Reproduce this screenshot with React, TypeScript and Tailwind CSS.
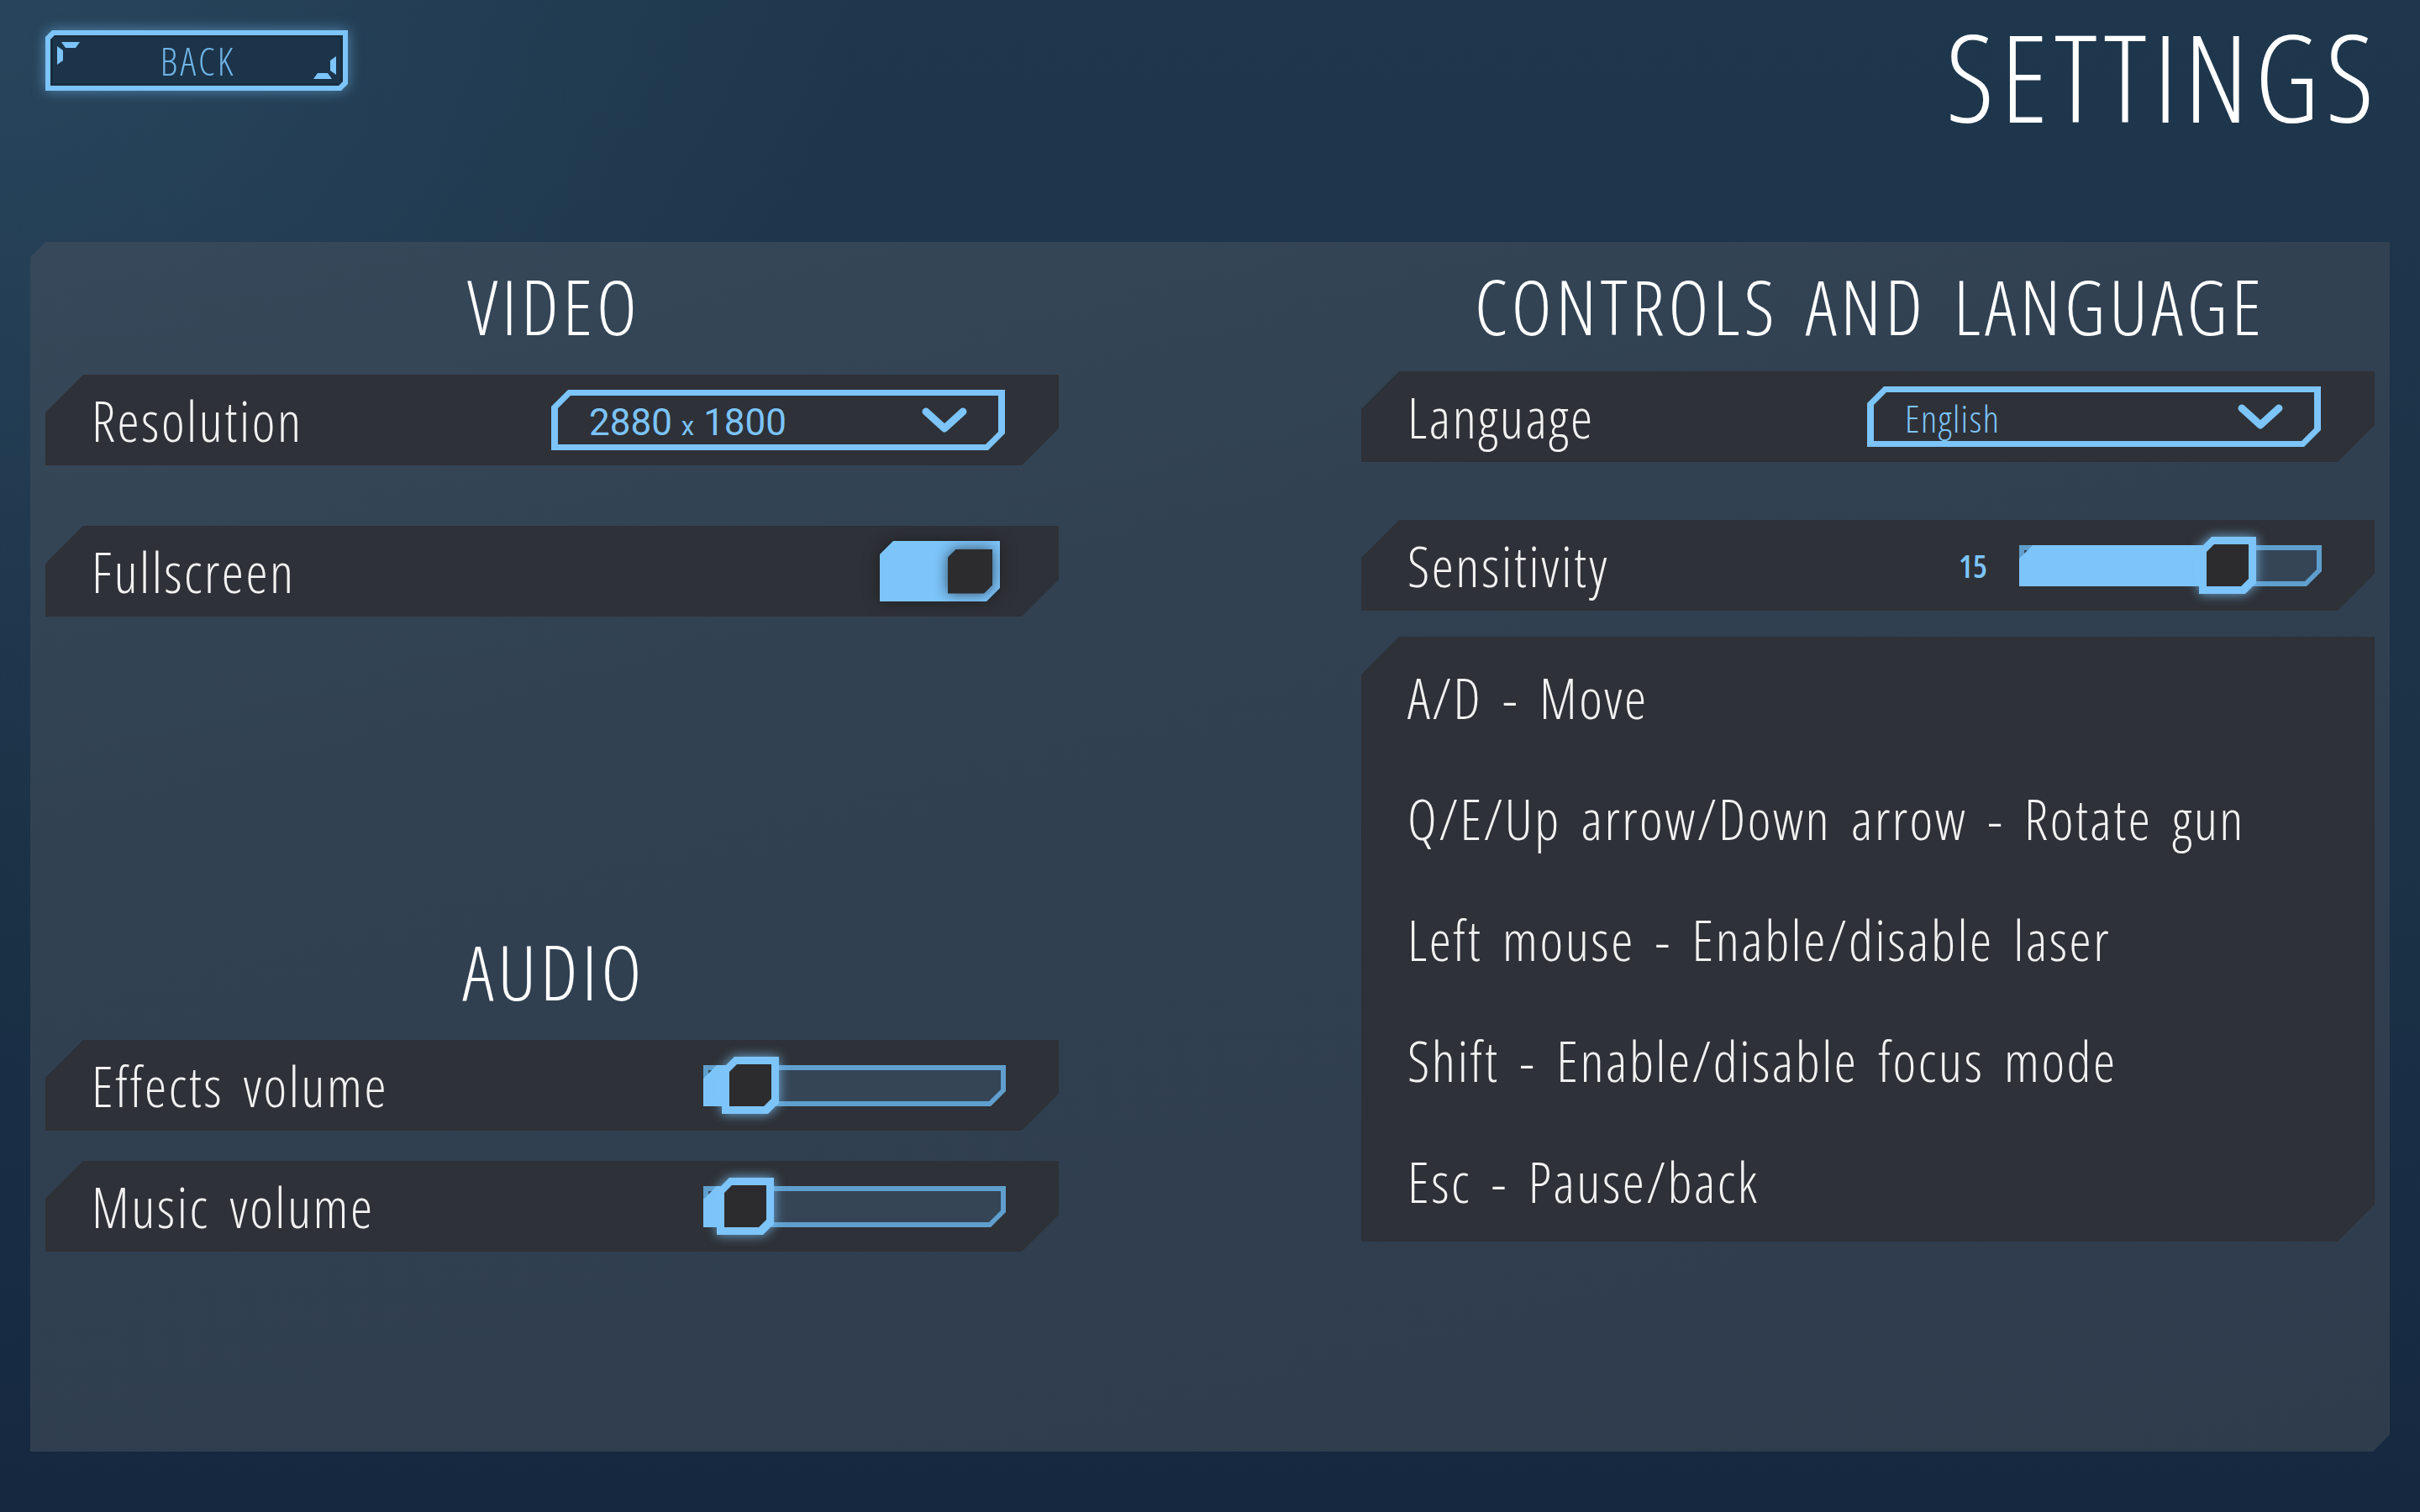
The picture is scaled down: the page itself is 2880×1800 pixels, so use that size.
import React from "react";

const controls = [
  "A/D - Move",
  "Q/E/Up arrow/Down arrow - Rotate gun",
  "Left mouse - Enable/disable laser",
  "Shift - Enable/disable focus mode",
  "Esc - Pause/back",
];

function Chevron() {
  return (
    <svg width="54" height="31" viewBox="0 0 54 31" fill="none">
      <polyline
        points="5,5 27,25 49,5"
        stroke="#7cc4f9"
        strokeWidth="9"
        strokeLinecap="round"
        strokeLinejoin="round"
      />
    </svg>
  );
}

function Bracket({ className = "" }: { className?: string }) {
  return (
    <svg width="27" height="27" viewBox="0 0 27 27" className={className}>
      <polygon points="5,0 27,0 22,7 10,7" fill="#7cc4f9" />
      <polygon points="0,5 7,10 7,22 0,27" fill="#7cc4f9" />
    </svg>
  );
}

function Row({
  label,
  children,
  className = "",
}: {
  label: string;
  children?: React.ReactNode;
  className?: string;
}) {
  return (
    <div
      className={`flex h-[108px] shrink-0 items-center justify-between bg-[#2e3137] pl-[55px] [clip-path:polygon(45px_0,100%_0,100%_calc(100%_-_44px),calc(100%_-_44px)_100%,0_100%,0_45px)] ${className}`}
    >
      <span className="text-[66px] leading-none tracking-[2.5px] text-[#f2f2f2] [word-spacing:9px]">
        {label}
      </span>
      {children}
    </div>
  );
}

function Dropdown({ children }: { children: React.ReactNode }) {
  return (
    <div className="mr-[64px] h-[72px] w-[540px] bg-[#7cc4f9] p-[7px_8px] [clip-path:polygon(20px_0,100%_0,100%_calc(100%_-_20px),calc(100%_-_20px)_100%,0_100%,0_20px)]">
      <div className="flex h-full items-center justify-between bg-[#2e3137] pl-[37px] pr-[37px] [clip-path:polygon(15px_0,100%_0,100%_calc(100%_-_15px),calc(100%_-_15px)_100%,0_100%,0_15px)]">
        {children}
        <Chevron />
      </div>
    </div>
  );
}

function Toggle() {
  return (
    <div className="mr-[70px] drop-shadow-[0_0_10px_rgba(0,0,0,0.35)]">
      <div className="flex h-[72px] w-[143px] items-center justify-end bg-[#7cc4f9] pr-[9px] [clip-path:polygon(16px_0,100%_0,100%_calc(100%_-_16px),calc(100%_-_16px)_100%,0_100%,0_16px)]">
        <div className="drop-shadow-[0_0_8px_rgba(25,35,50,0.75)]">
          <div className="h-[53px] w-[53px] bg-[#2c2c2e] [clip-path:polygon(10px_0,100%_0,100%_calc(100%_-_10px),calc(100%_-_10px)_100%,0_100%,0_10px)]" />
        </div>
      </div>
    </div>
  );
}

function Slider({ knob, className = "" }: { knob: number; className?: string }) {
  return (
    <div className={`relative h-[68px] w-[360px] ${className}`}>
      <div className="absolute inset-x-0 top-[10px] h-[49px] bg-[#5f9fce] p-[6px] [clip-path:polygon(0_0,100%_0,100%_calc(100%_-_18px),calc(100%_-_18px)_100%,0_100%)]">
        <div className="h-full w-full bg-[#354556] [clip-path:polygon(0_0,100%_0,100%_calc(100%_-_14px),calc(100%_-_14px)_100%,0_100%)]" />
      </div>
      <div
        className="absolute left-0 top-[10px] h-[49px] bg-[#7cc4f9] [clip-path:polygon(16px_0,100%_0,100%_100%,0_100%,0_16px)]"
        style={{ width: knob + 34 }}
      />
      <div
        className="absolute top-0 drop-shadow-[0_0_7px_rgba(124,196,249,0.85)]"
        style={{ left: knob }}
      >
        <div className="h-[68px] w-[68px] bg-[#7cc4f9] p-[9px] [clip-path:polygon(15px_0,100%_0,100%_calc(100%_-_13px),calc(100%_-_13px)_100%,0_100%,0_15px)]">
          <div className="h-full w-full bg-[#2c2c2e] [clip-path:polygon(9px_0,100%_0,100%_calc(100%_-_9px),calc(100%_-_9px)_100%,0_100%,0_9px)]" />
        </div>
      </div>
    </div>
  );
}

function Heading({ children, className = "" }: { children: React.ReactNode; className?: string }) {
  return (
    <h2
      className={`pl-[5px] text-center text-[91px] leading-none tracking-[5px] text-white [word-spacing:10px] ${className}`}
    >
      {children}
    </h2>
  );
}

export default function App() {
  return (
    <div className="flex h-[1800px] w-[2880px] flex-col overflow-hidden bg-[radial-gradient(circle_at_0%_0%,rgba(48,80,106,0.55),transparent_30%),linear-gradient(180deg,#1e374c_0%,#1b3146_60%,#152840_100%)] px-[36px] pb-[72px] font-['Open_Sans',sans-serif] font-light font-stretch-condensed">
      {/* top bar */}
      <header className="flex h-[288px] shrink-0 items-start justify-between">
        <div className="ml-[18px] mt-[36px] drop-shadow-[0_0_8px_rgba(124,196,249,0.55)]">
          <div className="h-[72px] w-[360px] bg-[#7cc4f9] p-[6px] [clip-path:polygon(8px_0,100%_0,100%_calc(100%_-_8px),calc(100%_-_8px)_100%,0_100%,0_8px)]">
            <div className="relative flex h-full items-center justify-center bg-[#1c3449] shadow-[inset_0_0_0_3px_rgba(12,24,36,0.25)] [clip-path:polygon(5px_0,100%_0,100%_calc(100%_-_5px),calc(100%_-_5px)_100%,0_100%,0_5px)]">
              <Bracket className="absolute left-[8px] top-[8px]" />
              <Bracket className="absolute bottom-[8px] right-[8px] rotate-180" />
              <span className="pl-[3px] text-[46px] leading-none tracking-[3px] text-[#6fb4e8]">
                BACK
              </span>
            </div>
          </div>
        </div>
        <h1 className="mr-[11px] mt-[4px] whitespace-nowrap text-[144px] leading-[1.2] tracking-[8px] text-white">
          SETTINGS
        </h1>
      </header>

      {/* settings panel */}
      <main className="grid flex-1 grid-cols-2 gap-[360px] bg-[linear-gradient(165deg,#364859_0%,#314152_35%,#2f3c4c_100%)] px-[18px] [clip-path:polygon(18px_0,100%_0,100%_calc(100%_-_20px),calc(100%_-_20px)_100%,0_100%,0_18px)]">
        <section className="flex flex-col">
          <Heading className="mt-[31px]">VIDEO</Heading>
          <Row label="Resolution" className="mt-[36px]">
            <Dropdown>
              <span className="mt-[5px] font-['Roboto',sans-serif] text-[44px] font-normal leading-none font-stretch-normal text-[#7cc4f9]">
                2880 <span className="text-[31px]">x</span> 1800
              </span>
            </Dropdown>
          </Row>
          <Row label="Fullscreen" className="mt-[72px]">
            <Toggle />
          </Row>

          <Heading className="mt-[377px]">AUDIO</Heading>
          <Row label="Effects volume" className="mt-[36px]">
            <Slider knob={22} className="mr-[63px]" />
          </Row>
          <Row label="Music volume" className="mt-[36px]">
            <Slider knob={16} className="mr-[63px]" />
          </Row>
        </section>

        <section className="flex flex-col">
          <Heading className="mt-[31px]">CONTROLS AND LANGUAGE</Heading>
          <Row label="Language" className="mt-[32px]">
            <Dropdown>
              <span className="mt-[2px] text-[45px] leading-none tracking-[1.5px] text-[#7cc4f9]">
                English
              </span>
            </Dropdown>
          </Row>
          <Row label="Sensitivity" className="mt-[69px]">
            <div className="mr-[63px] flex items-center gap-[38px]">
              <span className="text-[38px] font-semibold leading-none text-[#7cc4f9]">15</span>
              <Slider knob={214} />
            </div>
          </Row>
          <div className="mt-[31px] bg-[#2e3137] pl-[55px] text-[66px] leading-[144px] tracking-[2.5px] text-[#f2f2f2] [word-spacing:9px] [clip-path:polygon(45px_0,100%_0,100%_calc(100%_-_44px),calc(100%_-_44px)_100%,0_100%,0_45px)]">
            {controls.map((line) => (
              <p key={line}>{line}</p>
            ))}
          </div>
        </section>
      </main>
    </div>
  );
}
